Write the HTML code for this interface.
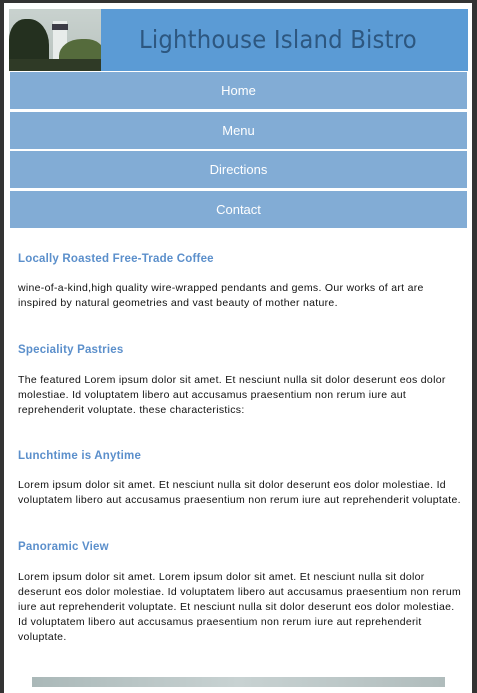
<!DOCTYPE html>
<html><head><meta charset="utf-8"><style>
html,body{margin:0;padding:0}
body{width:477px;height:681px;background:#333;overflow:hidden;font-family:"Liberation Sans",sans-serif}
#wrap{position:absolute;left:4px;top:3px;width:468px;height:690px;background:#fff}
#hdr{position:absolute;left:5px;top:6px;width:459px;height:62px;background:#5b9bd5}
#img{position:absolute;left:0;top:0;width:92px;height:62px;background:linear-gradient(#c9d2cf,#b8c2bd);overflow:hidden}
#hdr h1{position:absolute;left:130px;top:16px;margin:0;font-weight:normal;font-size:24.5px;color:#2d5780;letter-spacing:0.2px;font-family:"DejaVu Sans","Liberation Sans",sans-serif;transform:scaleX(0.93);transform-origin:left}
.nav{position:absolute;left:6px;width:457px;height:37px;background:#82acd5;color:#fff;text-align:center;line-height:37px;font-size:13px}
.c{position:absolute;left:14px;width:450px;font-size:10.5px;line-height:15px;color:#111;letter-spacing:0.3px;white-space:nowrap}
.c h2{font-size:11.5px;color:#5b8fcb;margin:0;letter-spacing:0.2px}
p{margin:0}
</style></head><body>
<div id="wrap">
<div id="hdr"><div id="img">
<div style="position:absolute;left:0;top:10px;width:40px;height:52px;background:#24301f;border-radius:40% 50% 0 0"></div>
<div style="position:absolute;left:44px;top:12px;width:14px;height:50px;background:#e8ecea"></div>
<div style="position:absolute;left:43px;top:15px;width:16px;height:6px;background:#3a3a44"></div>
<div style="position:absolute;left:50px;top:30px;width:45px;height:34px;background:#556b3c;border-radius:50% 40% 0 0"></div>
<div style="position:absolute;left:0;top:50px;width:92px;height:12px;background:#2f3a26"></div>
</div><h1>Lighthouse Island Bistro</h1></div>
<div class="nav" style="top:69px">Home</div>
<div class="nav" style="top:109px">Menu</div>
<div class="nav" style="top:148px">Directions</div>
<div class="nav" style="top:188px">Contact</div>
<div class="c" style="top:249px"><h2>Locally Roasted Free-Trade Coffee</h2></div>
<div class="c" style="top:278px"><p>wine-of-a-kind,high quality wire-wrapped pendants and gems. Our works of art are<br>inspired by natural geometries and vast beauty of mother nature.</p></div>
<div class="c" style="top:340px"><h2>Speciality Pastries</h2></div>
<div class="c" style="top:370px"><p>The featured Lorem ipsum dolor sit amet. Et nesciunt nulla sit dolor deserunt eos dolor<br>molestiae. Id voluptatem libero aut accusamus praesentium non rerum iure aut<br>reprehenderit voluptate. these characteristics:</p></div>
<div class="c" style="top:446px"><h2>Lunchtime is Anytime</h2></div>
<div class="c" style="top:475px"><p>Lorem ipsum dolor sit amet. Et nesciunt nulla sit dolor deserunt eos dolor molestiae. Id<br>voluptatem libero aut accusamus praesentium non rerum iure aut reprehenderit voluptate.</p></div>
<div class="c" style="top:537px"><h2>Panoramic View</h2></div>
<div class="c" style="top:567px"><p>Lorem ipsum dolor sit amet. Lorem ipsum dolor sit amet. Et nesciunt nulla sit dolor<br>deserunt eos dolor molestiae. Id voluptatem libero aut accusamus praesentium non rerum<br>iure aut reprehenderit voluptate. Et nesciunt nulla sit dolor deserunt eos dolor molestiae.<br>Id voluptatem libero aut accusamus praesentium non rerum iure aut reprehenderit<br>voluptate.</p></div>
<div style="position:absolute;left:28px;top:674px;width:413px;height:10px;background:linear-gradient(90deg,#aab8b8,#c8d2d2,#b0bcbc)"></div>
</div>
</body></html>
